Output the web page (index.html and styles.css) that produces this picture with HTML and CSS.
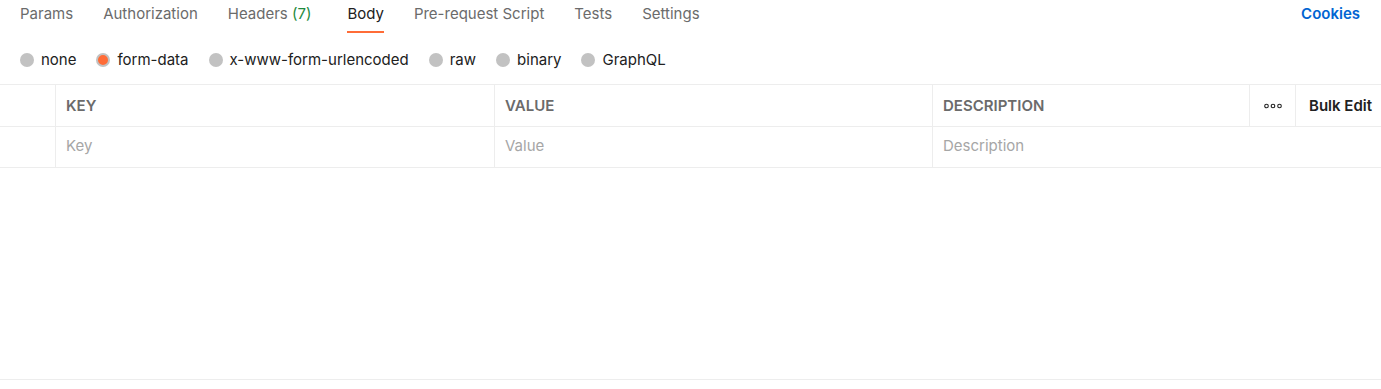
FILE: index.html
```html
<!DOCTYPE html>
<html lang="en">
<head>
    <meta charset="UTF-8">
    <title>Request Body</title>
    <link rel="stylesheet" href="styles.css">
</head>
<body>
    <div class="pane">
        <div class="tabs">
            <nav class="tab-list">
                <span class="tab">Params</span>
                <span class="tab">Authorization</span>
                <span class="tab headers">Headers <span class="count">(7)</span></span>
                <span class="tab active">Body</span>
                <span class="tab">Pre-request Script</span>
                <span class="tab">Tests</span>
                <span class="tab">Settings</span>
            </nav>
            <a class="cookies">Cookies</a>
        </div>

        <div class="body-types">
            <label class="radio"><span class="dot"></span>none</label>
            <label class="radio selected"><span class="dot"></span>form-data</label>
            <label class="radio"><span class="dot"></span>x-www-form-urlencoded</label>
            <label class="radio"><span class="dot"></span>raw</label>
            <label class="radio"><span class="dot"></span>binary</label>
            <label class="radio"><span class="dot"></span>GraphQL</label>
        </div>

        <div class="kv-table">
            <div class="row head">
                <div class="cell"></div>
                <div class="cell">KEY</div>
                <div class="cell">VALUE</div>
                <div class="cell">DESCRIPTION</div>
                <div class="cell more">
                    <svg width="18" height="6" viewBox="0 0 18 6">
                        <circle cx="2.5" cy="3" r="1.8" fill="none" stroke="#212121" stroke-width="1.1"/>
                        <circle cx="9" cy="3" r="1.8" fill="none" stroke="#212121" stroke-width="1.1"/>
                        <circle cx="15.5" cy="3" r="1.8" fill="none" stroke="#212121" stroke-width="1.1"/>
                    </svg>
                </div>
                <div class="cell bulk">Bulk Edit</div>
            </div>
            <div class="row entry">
                <div class="cell"></div>
                <div class="cell placeholder">Key</div>
                <div class="cell placeholder">Value</div>
                <div class="cell placeholder wide">Description</div>
            </div>
        </div>
    </div>
</body>
</html>
```

FILE: styles.css
```css
:root {
    --text: #212121;
    --muted: #6b6b6b;
    --placeholder: #a6a6a6;
    --border: #ededed;
    --orange: #ff6c37;
    --blue: #0265d2;
}

body {
    margin: 0;
    background: #ffffff;
    font-family: 'Inter', 'Noto Sans', sans-serif;
    font-size: 15px;
    color: var(--text);
}

.pane {
    height: 379px;
    border-bottom: 1px solid var(--border);
}

.tabs {
    display: flex;
    justify-content: space-between;
    align-items: flex-start;
    padding: 0 21px 0 20px;
    height: 33px;
}

.tab-list {
    display: flex;
    gap: 30px;
}

.tab {
    color: var(--muted);
    line-height: 20px;
    padding-top: 4px;
    height: 27px;
    border-bottom: 2px solid transparent;
}

.tab.headers {
    margin-right: 6px;
}

.tab.active {
    color: var(--text);
    border-bottom-color: var(--orange);
}

.count {
    color: #1d8a3e;
}

.cookies {
    color: var(--blue);
    font-weight: 600;
    line-height: 20px;
    padding-top: 4px;
}

.body-types {
    display: flex;
    align-items: center;
    gap: 20px;
    padding: 2px 20px 0;
    height: 49px;
}

.radio {
    display: flex;
    align-items: center;
    gap: 7px;
    line-height: 20px;
}

.dot {
    flex-shrink: 0;
    width: 14px;
    height: 14px;
    border-radius: 50%;
    background: #c2c2c2;
    box-sizing: border-box;
}

.radio.selected .dot {
    background: var(--orange);
    border: 2px solid #c2c2c2;
}

.kv-table {
    border-top: 1px solid var(--border);
}

.row {
    display: grid;
    grid-template-columns: 56px 439px 438px 317px 46px 1fr;
    border-bottom: 1px solid var(--border);
}

.head {
    height: 41px;
}

.entry {
    height: 40px;
}

.cell {
    display: flex;
    align-items: center;
    padding-left: 10px;
    border-right: 1px solid var(--border);
}

.head .cell {
    color: var(--muted);
    font-weight: 600;
}

.head .cell.more {
    justify-content: center;
    padding-left: 0;
}

.head .cell.bulk {
    color: var(--text);
    padding-left: 13px;
    border-right: none;
}

.placeholder {
    color: var(--placeholder);
    padding-bottom: 3px;
}

.cell.wide {
    grid-column: 4 / 7;
    border-right: none;
}
```
